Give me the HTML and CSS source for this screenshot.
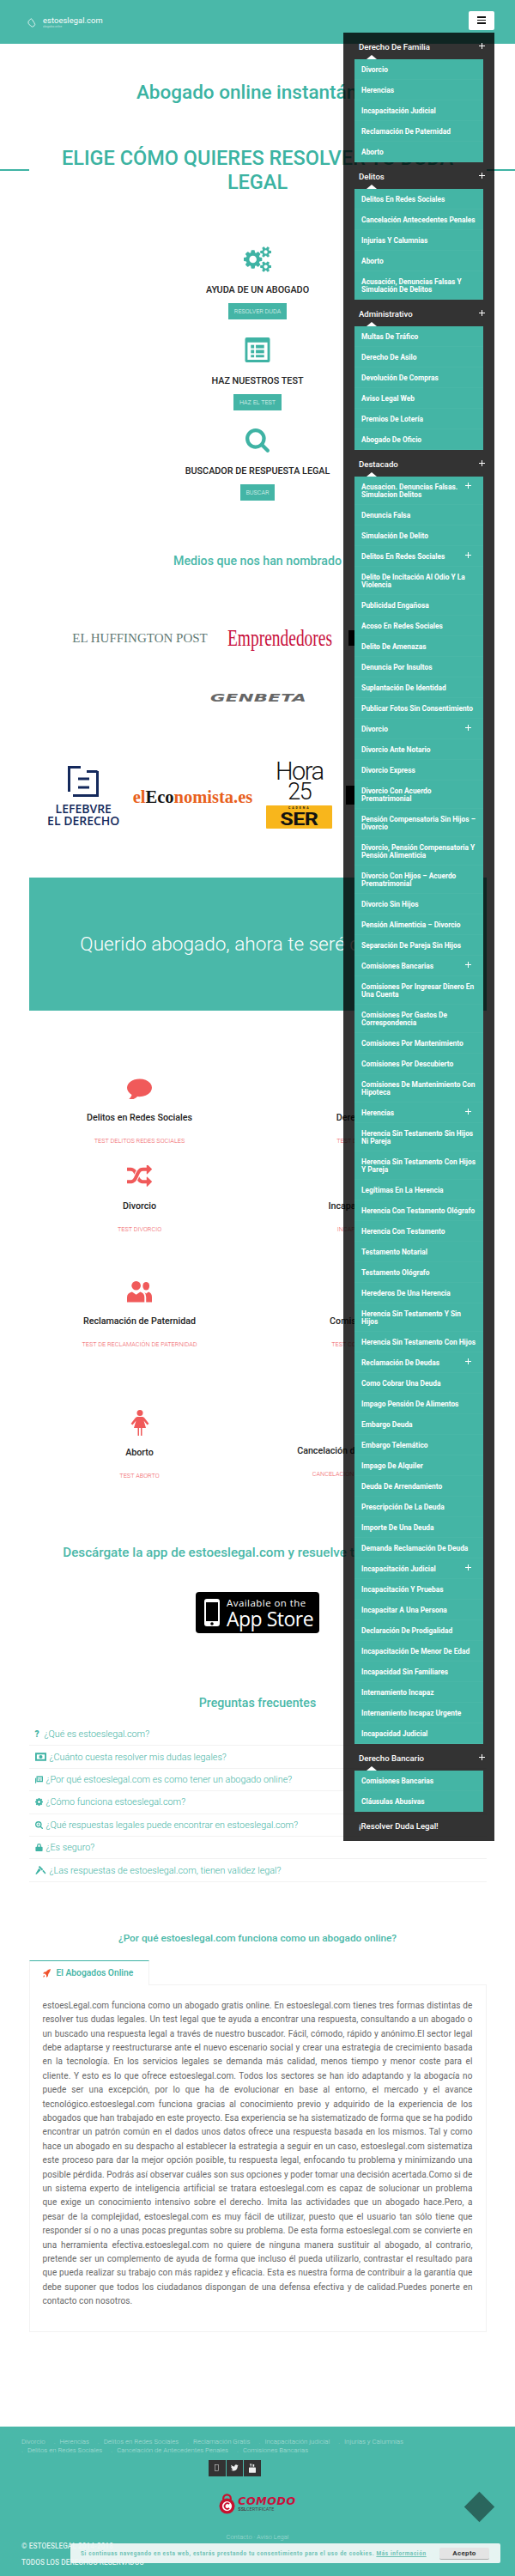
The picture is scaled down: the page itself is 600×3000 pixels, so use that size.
FILE: index.html
```html
<!DOCTYPE html>
<html lang="es">
<head>
<meta charset="utf-8">
<title>estoeslegal.com</title>
<link rel="stylesheet" href="styles.css">
</head>
<body>
<header class="topbar">
  <a class="brand">
    <svg class="brand-icon" viewBox="0 0 14 14"><path d="M3 4.500 L5.500 1.800 A1.600 1.600 0 0 1 8 2 L11.300 7 A3.300 3.300 0 0 1 6 11.600 L3 8.500 Q1.800 6 3 4.500" fill="none" stroke="#fff" stroke-width="1"/></svg>
    <span class="brand-text"><span class="brand-name">estoeslegal.com</span><span class="brand-sub">abogados online</span></span>
  </a>
  <button class="burger"><span></span><span></span><span></span></button>
</header>

<main>
  <h1 class="lead">Abogado online instantáneo</h1>
  <div class="title-row">
    <span class="title-line"></span>
    <h2 class="title">ELIGE CÓMO QUIERES RESOLVER TU DUDA LEGAL</h2>
    <span class="title-line"></span>
  </div>

  <section class="features">
    <div class="feature">
      <div class="feature-icon"><svg class="ico-gears" viewBox="0 0 1920 1792"><path d="M896 896q0-106-75-181t-181-75-181 75-75 181 75 181 181 75 181-75 75-181zm768 512q0-52-38-90t-90-38-90 38-38 90q0 53 37.500 90.500t90.500 37.500 90.500-37.500 37.500-90.500zm0-1024q0-52-38-90t-90-38-90 38-38 90q0 53 37.500 90.500t90.500 37.500 90.500-37.500 37.500-90.500zm-384 421v185q0 10-7 19.500t-16 10.500l-155 24q-11 35-32 76 34 48 90 115 7 11 7 20 0 12-7 19-23 30-82.500 89.500t-78.500 59.500q-11 0-21-7l-115-90q-37 19-77 31-11 108-23 155-7 24-30 24h-186q-11 0-20-7.500t-10-17.500l-23-153q-34-10-75-31l-118 89q-7 7-20 7-11 0-21-8-144-133-144-160 0-9 7-19 10-14 41-53t47-61q-23-44-35-82l-152-24q-10-1-17-9.500t-7-19.500v-185q0-10 7-19.500t16-10.500l155-24q11-35 32-76-34-48-90-115-7-11-7-20 0-12 7-20 22-30 82-89t79-59q11 0 21 7l115 90q34-18 77-32 11-108 23-154 7-24 30-24h186q11 0 20 7.500t10 17.500l23 153q34 10 75 31l118-89q8-7 20-7 11 0 21 8 144 133 144 160 0 8-7 19-12 16-42 54t-45 60q23 48 34 82l152 23q10 2 17 10.500t7 19.500zm640 533v140q0 16-149 31-12 27-30 52 51 113 51 138 0 4-4 7-122 71-124 71-8 0-46-47t-52-68q-20 2-30 2t-30-2q-14 21-52 68t-46 47q-2 0-124-71-4-3-4-7 0-25 51-138-18-25-30-52-149-15-149-31v-140q0-16 149-31 13-29 30-52-51-113-51-138 0-4 4-7 4-2 35-20t59-34 30-16q8 0 46 46.500t52 67.500q20-2 30-2t30 2q51-71 92-112l6-2q4 0 124 70 4 3 4 7 0 25-51 138 17 23 30 52 149 15 149 31zm0-1024v140q0 16-149 31-12 27-30 52 51 113 51 138 0 4-4 7-122 71-124 71-8 0-46-47t-52-68q-20 2-30 2t-30-2q-14 21-52 68t-46 47q-2 0-124-71-4-3-4-7 0-25 51-138-18-25-30-52-149-15-149-31v-140q0-16 149-31 13-29 30-52-51-113-51-138 0-4 4-7 4-2 35-20t59-34 30-16q8 0 46 46.500t52 67.500q20-2 30-2t30 2q51-71 92-112l6-2q4 0 124 70 4 3 4 7 0 25-51 138 17 23 30 52 149 15 149 31z"/></svg></div>
      <h3 class="feature-title">AYUDA DE UN ABOGADO</h3>
      <a class="btn">RESOLVER DUDA</a>
    </div>
    <div class="feature">
      <div class="feature-icon"><svg class="ico-list" viewBox="0 0 30 30"><path fill-rule="evenodd" d="M2 0h26a2 2 0 0 1 2 2v26a2 2 0 0 1-2 2H2a2 2 0 0 1-2-2V2a2 2 0 0 1 2-2zM3 6v21h24V6z"/><rect x="7" y="9" width="4" height="4"/><rect x="13" y="9" width="10" height="4"/><rect x="7" y="15" width="4" height="4"/><rect x="13" y="15" width="10" height="4"/><rect x="7" y="21" width="4" height="3"/><rect x="13" y="21" width="10" height="3"/></svg></div>
      <h3 class="feature-title">HAZ NUESTROS TEST</h3>
      <a class="btn">HAZ EL TEST</a>
    </div>
    <div class="feature">
      <div class="feature-icon"><svg class="ico-search" viewBox="64 128 1664 1664"><path d="M1216 832q0-185-131.500-316.500t-316.500-131.500-316.500 131.500-131.500 316.500 131.500 316.500 316.500 131.500 316.500-131.500 131.500-316.500zm512 832q0 52-38 90t-90 38q-54 0-90-38l-343-342q-179 124-399 124-143 0-273.500-55.500t-225-150-150-225-55.500-273.500 55.500-273.500 150-225 225-150 273.500-55.500 273.500 55.500 225 150 150 225 55.500 273.500q0 220-124 399l343 343q37 37 37 90z"/></svg></div>
      <h3 class="feature-title">BUSCADOR DE RESPUESTA LEGAL</h3>
      <a class="btn">BUSCAR</a>
    </div>
  </section>

  <h2 class="subhead">Medios que nos han nombrado</h2>

  <div class="logos logos-one">
    <span class="logo-huff">EL HUFFINGTON POST</span>
    <span class="logo-empr"><span>Emprendedores</span></span>
    <span class="logo-hidden"></span>
  </div>
  <div class="logos logos-two">
    <span class="logo-genbeta"><span>GENBETA</span></span>
  </div>
  <div class="logos logos-three">
    <span class="logo-lefebvre">
      <svg class="lefebvre-mark" viewBox="0 0 36 36"><path d="M15 1.500H1.500V30 M34.500 6V34.500H6 M12 15H25 M12 25H25 M22 6.500H34.500" fill="none" stroke="#14295c" stroke-width="3"/></svg>
      <span>LEFEBVRE</span><span>EL DERECHO</span>
    </span>
    <span class="logo-eco">el<b>Eco</b>nomista.es</span>
    <span class="logo-ser">
      <span class="ser-hora">Hora</span>
      <span class="ser-num">25</span>
      <span class="ser-box"><small>CADENA</small><strong>SER</strong></span>
    </span>
    <span class="logo-hidden logo-hidden-two"></span>
  </div>

  <section class="banner"><p>Querido abogado, ahora te seré cliente fiel</p></section>

  <section class="tests">
    <article class="test">
      <div class="test-icon"><svg viewBox="0 128 1792 1560"><path d="M1792 896q0 174-120 321.500t-326 233-450 85.500q-70 0-145-8-198 175-460 242-49 14-114 22-17 2-30.500-9t-17.500-29v-1q-3-4-.5-12t2-10 4.500-9.500l6-9 7-8.500 8-9q7-8 31-34.500t34.500-38 31-39.500 32.500-51 27-59 26-76q-157-89-247.500-220t-90.500-281q0-130 71-248.500t191-204.500 286-136.500 348-50.500q244 0 450 85.500t326 233 120 321.500z"/></svg></div>
      <h3>Delitos en Redes Sociales</h3><a>TEST DELITOS REDES SOCIALES</a>
    </article>
    <article class="test">
      <div class="test-icon"></div>
      <h3>Derecho de Familia</h3><a>TEST DERECHO DE FAMILIA</a>
    </article>
    <article class="test">
      <div class="test-icon"><svg viewBox="0 160 1792 1472"><path d="M666 481q-60 92-137 273-22-45-37-72.500t-40.500-63.500-51-56.500-63-35-81.500-14.500h-224q-14 0-23-9t-9-23v-192q0-14 9-23t23-9h224q250 0 410 225zm1126 799q0 14-9 23l-320 320q-9 9-23 9-13 0-22.500-9.500t-9.500-22.500v-192q-32 0-85 .5t-81 1-73-1-71-5-64-10.500-63-18.500-58-28.500-59-40-55-53.500-56-69.500q59-93 136-273 22 45 37 72.500t40.500 63.500 51 56.500 63 35 81.500 14.500h256v-192q0-14 9-23t23-9q12 0 24 10l319 319q9 9 9 23zm0-896q0 14-9 23l-320 320q-9 9-23 9-13 0-22.500-9.500t-9.500-22.500v-192h-256q-48 0-87 15t-69 45-51 61.500-45 77.500q-32 62-78 171-29 66-49.500 111t-54 105-64 100-74 83-90 68.500-106.500 42-128 16.500h-224q-14 0-23-9t-9-23v-192q0-14 9-23t23-9h224q48 0 87-15t69-45 51-61.500 45-77.500q32-62 78-171 29-66 49.500-111t54-105 64-100 74-83 90-68.500 106.500-42 128-16.500h256v-192q0-14 9-23t23-9q12 0 24 10l319 319q9 9 9 23z"/></svg></div>
      <h3>Divorcio</h3><a>TEST DIVORCIO</a>
    </article>
    <article class="test">
      <div class="test-icon"></div>
      <h3>Incapacitación Judicial</h3><a>INCAPACITACIÓN JUDICIAL</a>
    </article>
    <article class="test">
      <div class="test-icon"><svg viewBox="0 0 30 26"><circle cx="11" cy="6" r="5.500"/><path d="M0 26V20Q0 15 6 13.500L11 17L16 13.500Q21 15 21 20V26Z"/><ellipse cx="23" cy="6.500" rx="4" ry="5"/><path d="M21 14L23 15.500L26 13.500Q30 15 30 20V26H23V20Q23 16 21 14Z"/></svg></div>
      <h3>Reclamación de Paternidad</h3><a>TEST DE RECLAMACIÓN DE PATERNIDAD</a>
    </article>
    <article class="test">
      <div class="test-icon"></div>
      <h3>Comisiones Bancarias</h3><a>TEST COMISIONES BANCARIAS</a>
    </article>
    <article class="test">
      <div class="test-icon"><svg viewBox="0 0 22 30"><circle cx="11" cy="3.500" r="3.500"/><path d="M8 8H14Q15.500 8 16.500 9.500L21.500 16L19.500 17.500L15.500 12.500L18 21H13.500V30H12V21H10V30H8.500V21H4L6.500 12.500L2.500 17.500L.5 16L5.500 9.500Q6.500 8 8 8Z"/></svg></div>
      <h3>Aborto</h3><a>TEST ABORTO</a>
    </article>
    <article class="test">
      <div class="test-icon"></div>
      <h3>Cancelación de Antecedentes Penales</h3><a>CANCELACIÓN DE ANTECEDENTES PENALES</a>
    </article>
  </section>

  <h2 class="subhead subhead-app">Descárgate la app de estoeslegal.com y resuelve tus dudas legales</h2>
  <div class="store-wrap">
    <a class="store">
      <svg class="store-phone" viewBox="0 0 18 32"><rect width="18" height="32" rx="3" fill="#fff"/><rect x="2" y="4" width="14" height="22" fill="#000"/><circle cx="9" cy="29" r="1.800" fill="#000"/></svg>
      <span class="store-text"><span class="store-top">Available on the</span><span class="store-main">App Store</span></span>
    </a>
  </div>

  <h2 class="subhead subhead-faq">Preguntas frecuentes</h2>
  <ul class="faq">
    <li><span class="faq-q">?</span>¿Qué es estoeslegal.com?</li>
    <li><svg class="faq-ico faq-ico-wide" viewBox="0 0 14 10"><path fill-rule="evenodd" d="M0 0h14v10H0zM2 2v6h10V2z"/><circle cx="7" cy="5" r="2.200"/></svg>¿Cuánto cuesta resolver mis dudas legales?</li>
    <li><svg class="faq-ico" viewBox="0 0 12 11"><path d="M2 0h10v9H2zM0 3h1.500v8H0z"/><path d="M3.500 2h7v2h-7zM3.500 5h3v2h-3zM7.500 5h3v2h-3z" fill="#fff"/></svg>¿Por qué estoeslegal.com es como tener un abogado online?</li>
    <li><svg class="faq-ico" viewBox="128 128 1536 1536"><path d="M1152 896q0-106-75-181t-181-75-181 75-75 181 75 181 181 75 181-75 75-181zm512-109v222q0 12-8 23t-20 13l-185 28q-19 54-39 91 35 50 107 138 10 12 10 25t-9 23q-27 37-99 108t-94 71q-12 0-26-9l-138-108q-44 23-91 38-16 136-29 186-7 28-36 28h-222q-14 0-24.500-8.500t-11.500-21.500l-28-184q-49-16-90-37l-141 107q-10 9-25 9-14 0-25-11-126-114-165-168-7-10-7-23 0-12 8-23 15-21 51-66.500t54-70.500q-27-50-41-99l-183-27q-13-2-21-12.500t-8-23.500v-222q0-12 8-23t19-13l186-28q14-46 39-92-40-57-107-138-10-12-10-24 0-10 9-23 26-36 98.500-107.500t94.500-71.500q13 0 26 10l138 107q44-23 91-38 16-136 29-186 7-28 36-28h222q14 0 24.500 8.500t11.500 21.500l28 184q49 16 90 37l142-107q9-9 24-9 13 0 25 10 129 119 165 170 7 8 7 22 0 12-8 23-15 21-51 66.500t-54 70.500q26 50 41 98l183 28q13 2 21 12.500t8 23.500z"/></svg>¿Cómo funciona estoeslegal.com?</li>
    <li><svg class="faq-ico" viewBox="64 128 1664 1664"><path d="M1216 832q0-185-131.500-316.500t-316.500-131.500-316.500 131.500-131.500 316.500 131.500 316.500 316.500 131.500 316.500-131.500 131.500-316.500zm512 832q0 52-38 90t-90 38q-54 0-90-38l-343-342q-179 124-399 124-143 0-273.500-55.500t-225-150-150-225-55.500-273.500 55.500-273.500 150-225 225-150 273.500-55.500 273.500 55.500 225 150 150 225 55.500 273.500q0 220-124 399l343 343q37 37 37 90z"/><path d="M700 560h136v204h204v136H836v204H700V900H496V764h204z"/></svg>¿Qué respuestas legales puede encontrar en estoeslegal.com?</li>
    <li><svg class="faq-ico" viewBox="0 0 10 11"><path fill-rule="evenodd" d="M1 4.500H2V3a3 3 0 0 1 6 0v1.500H9q1 0 1 1V10q0 1-1 1H1q-1 0-1-1V5.500q0-1 1-1zM3.500 4.500h3V3a1.500 1.500 0 0 0-3 0z"/></svg>¿Es seguro?</li>
    <li><svg class="faq-ico faq-ico-wide" viewBox="0 0 13 11"><path d="M5 0L9.500 4.500L8 6L3.500 1.500zM4 3L6.500 5.500L1.500 10.500Q.5 11 0 10.500T.5 9zM9.800 5.200L13 9L12 10.500L8.500 6.500z"/></svg>¿Las respuestas de estoeslegal.com, tienen validez legal?</li>
  </ul>

  <h2 class="subhead subhead-why">¿Por qué estoeslegal.com funciona como un abogado online?</h2>
  <div class="tabs">
    <div class="tab">
      <svg class="rocket" viewBox="0 0 10 11"><path d="M10 0Q9.500 4 7 6.500L6.500 9.500L4.500 11L4.500 8L2.500 6L0 6L1.500 4L4 3.500Q6.500 .5 10 0zM1.500 8L2.500 9Q2 10.500 .3 10.700Q.5 9 1.500 8z"/></svg>
      <span>El Abogados Online</span>
    </div>
  </div>
  <div class="tab-body">
    <p>estoesLegal.com funciona como un abogado gratis online. En estoeslegal.com tienes tres formas distintas de resolver tus dudas legales. Un test legal que te ayuda a encontrar una respuesta, consultando a un abogado o un buscado una respuesta legal a través de nuestro buscador. Fácil, cómodo, rápido y anónimo.El sector legal debe adaptarse y reestructurarse ante el nuevo escenario social y crear una estrategia de crecimiento basada en la tecnología. En los servicios legales se demanda más calidad, menos tiempo y menor coste para el cliente. Y esto es lo que ofrece estoeslegal.com. Todos los sectores se han ido adaptando y la abogacía no puede ser una excepción, por lo que ha de evolucionar en base al entorno, el mercado y el avance tecnológico.estoeslegal.com funciona gracias al conocimiento previo y adquirido de la experiencia de los abogados que han trabajado en este proyecto. Esa experiencia se ha sistematizado de forma que se ha podido encontrar un patrón común en el dados unos datos ofrece una respuesta basada en los mismos. Tal y como hace un abogado en su despacho al establecer la estrategia a seguir en un caso, estoeslegal.com sistematiza este proceso para dar la mejor opción posible, tu respuesta legal, enfocando tu problema y minimizando una posible pérdida. Podrás así observar cuáles son sus opciones y poder tomar una decisión acertada.Como si de un sistema experto de inteligencia artificial se tratara estoeslegal.com es capaz de solucionar un problema que exige un conocimiento intensivo sobre el derecho. Imita las actividades que un abogado hace.Pero, a pesar de la complejidad, estoeslegal.com es muy fácil de utilizar, puesto que el usuario tan sólo tiene que responder sí o no a unas pocas preguntas sobre su problema. De esta forma estoeslegal.com se convierte en una herramienta efectiva.estoeslegal.com no quiere de ninguna manera sustituir al abogado, al contrario, pretende ser un complemento de ayuda de forma que incluso él pueda utilizarlo, contrastar el resultado para que pueda realizar su trabajo con más rapidez y eficacia. Esta es nuestra forma de contribuir a la garantía que debe suponer que todos los ciudadanos dispongan de una defensa efectiva y de calidad.Puedes ponerte en contacto con nosotros.</p>
  </div>
</main>

<footer class="footer">
  <ul class="foot-links">
    <li>Divorcio</li><li>Herencias</li><li>Delitos en Redes Sociales</li><li>Reclamación Gratis</li><li>Incapacitación judicial</li><li>Injurias y Calumnias</li><li>Delitos en Redes Sociales</li><li>Cancelación de Antecedentes Penales</li><li>Comisiones Bancarias</li>
  </ul>
  <div class="social">
    <a><svg viewBox="0 0 6 10"><rect x=".5" y=".5" width="5" height="9" fill="none" stroke="#ddd" stroke-width=".7"/></svg></a>
    <a><svg class="social-tw" viewBox="128 256 1600 1300"><path d="M1684 408q-67 98-162 167 1 14 1 42 0 130-38 259.500t-115.500 248.500-184.500 210.500-258 146-323 54.500q-271 0-496-145 35 4 78 4 225 0 401-138-105-2-188-64.500t-114-159.500q33 5 61 5 43 0 85-11-112-23-185.500-111.500t-73.500-205.500v-4q68 38 146 41-66-44-105-115t-39-154q0-88 44-163 121 149 294.500 238.500t371.500 99.500q-8-38-8-74 0-134 94.500-228.500t228.500-94.500q140 0 236 102 109-21 205-78-37 115-142 178 84-9 168-45z" fill="#eee"/></svg></a>
    <a><svg class="social-yt" viewBox="0 0 9 12"><path d="M1 0h1l.6 1.500L3.200 0h1L3 2.500V4H2V2.500zM5 1h2v3H5zM.8 5h7.400Q9 5 9 6v5q0 1-.8 1H.8Q0 12 0 11V6q0-1 .8-1z" fill="#eee"/></svg></a>
  </div>
  <div class="comodo">
    <svg class="comodo-lock" viewBox="0 0 22 28"><path d="M6 9V6.500a5 5 0 0 1 10 0V9" fill="none" stroke="#c8102e" stroke-width="2.600"/><circle cx="11" cy="17" r="10.500" fill="#c8102e"/><circle cx="11" cy="17" r="6.500" fill="#fff"/><path d="M14 14.200a3.800 3.800 0 1 0 0 5.600" fill="none" stroke="#c8102e" stroke-width="2"/></svg>
    <span class="comodo-text"><strong>COMODO</strong><small><b>SSL</b>CERTIFICATE</small></span>
  </div>
  <p class="foot-legal">Contacto · Aviso Legal</p>
  <p class="foot-copy">© ESTOESLEGAL 2014-2018</p>
  <p class="foot-copy foot-rights">TODOS LOS DERECHOS RESERVADOS</p>
</footer>

<nav class="side-menu">
  <div class="menu-head">Derecho De Familia<i class="plus"></i></div>
  <ul class="menu-panel">
    <li>Divorcio</li><li>Herencias</li><li>Incapacitación Judicial</li><li>Reclamación De Paternidad</li><li>Aborto</li>
  </ul>
  <div class="menu-head">Delitos<i class="plus"></i></div>
  <ul class="menu-panel">
    <li>Delitos En Redes Sociales</li><li>Cancelación Antecedentes Penales</li><li>Injurias Y Calumnias</li><li>Aborto</li><li>Acusación, Denuncias Falsas Y Simulación De Delitos</li>
  </ul>
  <div class="menu-head">Administrativo<i class="plus"></i></div>
  <ul class="menu-panel">
    <li>Multas De Tráfico</li><li>Derecho De Asilo</li><li>Devolución De Compras</li><li>Aviso Legal Web</li><li>Premios De Lotería</li><li>Abogado De Oficio</li>
  </ul>
  <div class="menu-head">Destacado<i class="plus"></i></div>
  <ul class="menu-panel">
    <li class="has-sub">Acusacion. Denuncias Falsas. Simulacion Delitos<i class="plus"></i></li>
    <li>Denuncia Falsa</li><li>Simulación De Delito</li>
    <li class="has-sub">Delitos En Redes Sociales<i class="plus"></i></li>
    <li>Delito De Incitación Al Odio Y La Violencia</li><li>Publicidad Engañosa</li><li>Acoso En Redes Sociales</li><li>Delito De Amenazas</li><li>Denuncia Por Insultos</li><li>Suplantación De Identidad</li><li>Publicar Fotos Sin Consentimiento</li>
    <li class="has-sub">Divorcio<i class="plus"></i></li>
    <li>Divorcio Ante Notario</li><li>Divorcio Express</li><li>Divorcio Con Acuerdo Prematrimonial</li><li>Pensión Compensatoria Sin Hijos – Divorcio</li><li>Divorcio, Pensión Compensatoria Y Pensión Alimenticia</li><li>Divorcio Con Hijos – Acuerdo Prematrimonial</li><li>Divorcio Sin Hijos</li><li>Pensión Alimenticia – Divorcio</li><li>Separación De Pareja Sin Hijos</li>
    <li class="has-sub">Comisiones Bancarias<i class="plus"></i></li>
    <li>Comisiones Por Ingresar Dinero En Una Cuenta</li><li>Comisiones Por Gastos De Correspondencia</li><li>Comisiones Por Mantenimiento</li><li>Comisiones Por Descubierto</li><li>Comisiones De Mantenimiento Con Hipoteca</li>
    <li class="has-sub">Herencias<i class="plus"></i></li>
    <li>Herencia Sin Testamento Sin Hijos Ni Pareja</li><li>Herencia Sin Testamento Con Hijos Y Pareja</li><li>Legítimas En La Herencia</li><li>Herencia Con Testamento Ológrafo</li><li>Herencia Con Testamento</li><li>Testamento Notarial</li><li>Testamento Ológrafo</li><li>Herederos De Una Herencia</li><li>Herencia Sin Testamento Y Sin Hijos</li><li>Herencia Sin Testamento Con Hijos</li>
    <li class="has-sub">Reclamación De Deudas<i class="plus"></i></li>
    <li>Como Cobrar Una Deuda</li><li>Impago Pensión De Alimentos</li><li>Embargo Deuda</li><li>Embargo Telemático</li><li>Impago De Alquiler</li><li>Deuda De Arrendamiento</li><li>Prescripción De La Deuda</li><li>Importe De Una Deuda</li><li>Demanda Reclamación De Deuda</li>
    <li class="has-sub">Incapacitación Judicial<i class="plus"></i></li>
    <li>Incapacitación Y Pruebas</li><li>Incapacitar A Una Persona</li><li>Declaración De Prodigalidad</li><li>Incapacitación De Menor De Edad</li><li>Incapacidad Sin Familiares</li><li>Internamiento Incapaz</li><li>Internamiento Incapaz Urgente</li><li>Incapacidad Judicial</li>
  </ul>
  <div class="menu-head">Derecho Bancario<i class="plus"></i></div>
  <ul class="menu-panel">
    <li>Comisiones Bancarias</li><li>Cláusulas Abusivas</li>
  </ul>
  <div class="menu-head menu-head-last">¡Resolver Duda Legal!</div>
</nav>

<a class="to-top"><i></i></a>

<aside class="cookie">
  <p>Si continuas navegando en esta web, estarás prestando tu consentimiento para el uso de cookies. <u>Más información</u></p>
  <button>Acepto</button>
</aside>
</body>
</html>
```
FILE: styles.css
```css
* { box-sizing: border-box; }
html, body { margin: 0; padding: 0; }
body {
  position: relative;
  height: 3000px;
  overflow: hidden;
  background: #fff;
  font-family: Roboto, "Liberation Sans", sans-serif;
  color: #222;
}
h1, h2, h3, p, ul { margin: 0; padding: 0; }
ul { list-style: none; }
svg { display: block; }

/* top bar */
.topbar {
  height: 51px;
  background: #4ab8a9;
  display: flex;
  justify-content: space-between;
  align-items: flex-start;
  padding: 13px 24.500px 0 31px;
}
.brand { display: flex; align-items: center; gap: 8px; color: #fff; margin-top: 5px; }
.brand-icon { width: 11px; height: 11px; margin-top: 2px; }
.brand-text { display: flex; flex-direction: column; }
.brand-name { font-size: 9.300px; font-weight: 400; line-height: 11px; letter-spacing: .1px; }
.brand-sub { font-size: 3px; line-height: 4px; opacity: .6; }
.burger {
  width: 30px; height: 22px;
  background: #fff; border: 0; border-radius: 2px;
  padding: 6px 10px 0;
  display: flex; flex-direction: column; gap: 2px;
}
.burger span { display: block; width: 10px; height: 1.500px; background: #111; }

/* headings */
.lead {
  margin-top: 42px;
  text-align: center;
  font-size: 22.500px;
  line-height: 28px;
  font-weight: 500;
  color: #3bb3a2;
}
.title-row { display: flex; align-items: center; margin-top: 49px; }
.title-line { flex: 0 0 33.500px; height: 2.500px; background: #3fb3a4; }
.title {
  flex: 1;
  text-align: center;
  font-size: 23.500px;
  line-height: 28px;
  font-weight: 500;
  color: #3bb3a2;
  padding: 0 30px;
}

/* features */
.features { padding-top: 61px; }
.feature { height: 105.500px; display: flex; flex-direction: column; align-items: center; }
.feature-icon { height: 30px; display: flex; align-items: center; justify-content: center; fill: #3fb3a4; }
.ico-gears { width: 32px; height: 30px; }
.ico-list { width: 30px; height: 29px; }
.ico-search { width: 28px; height: 28px; }
.feature-title { margin-top: 14px; font-size: 10.800px; line-height: 14px; font-weight: 500; color: #222; }
.btn {
  margin-top: 8px;
  height: 19px;
  padding: 0 6.500px;
  background: #44b5a6;
  color: #e6f7f4;
  font-size: 7.200px;
  font-weight: 300;
  line-height: 19px;
}
.subhead { text-align: center; font-size: 14.200px; line-height: 20px; font-weight: 500; color: #4ab8a9; }
.features + .subhead { margin-top: 39.500px; }

/* press logos */
.logos { display: flex; justify-content: center; }
.logos-one { margin-top: 65px; height: 30px; gap: 23px; align-items: center; }
.logos-two { margin-top: 45px; height: 20px; align-items: center; }
.logos-three { margin-top: 63px; height: 79px; gap: 16px; align-items: flex-start; }
.logo-huff { font-family: "Liberation Serif", serif; font-size: 15px; color: #5f7a74; white-space: nowrap; }
.logo-empr { width: 118px; height: 30px; display: block; }
.logo-empr span {
  display: block;
  font-family: "Liberation Serif", serif;
  font-size: 27px;
  line-height: 30px;
  color: #c8103c;
  white-space: nowrap;
  transform: scaleX(.72);
  transform-origin: left center;
}
.logo-hidden { width: 110px; height: 18px; background: #000; }
.logo-hidden-two { width: 141px; height: 22px; margin-top: 29px; }
.logo-genbeta { display: block; width: 111px; }
.logo-genbeta span {
  display: block;
  font-family: "DejaVu Sans", sans-serif;
  font-weight: 700;
  font-style: italic;
  font-size: 12.500px;
  line-height: 20px;
  color: #666;
  letter-spacing: .2px;
  transform: scaleX(1.700);
  transform-origin: left center;
}
.logo-lefebvre {
  display: flex; flex-direction: column; align-items: center;
  font-family: "Open Sans", sans-serif;
  color: #14295c;
  font-size: 14px;
  line-height: 14px;
  font-weight: 600;
  width: 83px;
  white-space: nowrap;
  margin-top: 6px;
}
.lefebvre-mark { width: 36px; height: 36px; margin-bottom: 7px; }
.logo-eco {
  font-family: "Liberation Serif", serif;
  font-weight: 700;
  font-size: 20.500px;
  line-height: 28px;
  color: #e8601c;
  white-space: nowrap;
  margin-top: 28px;
}
.logo-eco b { color: #111; }
.logo-ser { display: flex; flex-direction: column; align-items: center; width: 77px; }
.ser-hora { font-size: 29px; line-height: 24px; font-weight: 300; letter-spacing: -1.500px; color: #111; }
.ser-num { font-size: 27px; line-height: 24px; font-weight: 300; letter-spacing: -1.500px; color: #111; }
.ser-box {
  margin-top: 4px;
  width: 77px; height: 27px;
  background: #f8b61c;
  border-radius: 1px;
  display: flex; flex-direction: column; align-items: center;
  color: #111;
}
.ser-box small { font-size: 3.500px; line-height: 7px; letter-spacing: 2px; font-weight: 700; }
.ser-box strong { font-size: 21px; line-height: 18px; font-weight: 700; letter-spacing: -.5px; transform: scaleX(1.200); }

/* banner */
.banner {
  margin: 57px 33.500px 0 33.500px;
  height: 155px;
  background: #4ab8a9;
  display: flex;
  align-items: center;
  justify-content: center;
  color: #fff;
  padding-bottom: 1px;
}
.banner p { font-size: 22.600px; font-weight: 300; white-space: nowrap; }

/* tests */
.tests {
  margin: 75px 0 0 25px;
  width: 550px;
  display: grid;
  grid-template-columns: 275px 275px;
  grid-template-rows: 103px 134px 153px 80px;
}
.test { display: flex; flex-direction: column; align-items: center; text-align: center; }
.test-icon { height: 30px; display: flex; align-items: center; justify-content: center; fill: #f05a5a; }
.test-icon svg { width: 29px; height: 26px; }
.test:nth-child(7) .test-icon svg { width: 22px; height: 30px; }
.test h3 { margin-top: 13px; font-size: 10.700px; line-height: 14px; font-weight: 500; color: #222; white-space: nowrap; }
.test a { margin-top: 15px; font-size: 7.300px; line-height: 10px; font-weight: 300; color: #ef5a62; white-space: nowrap; }

.subhead-app { margin-top: 76px; font-size: 15.200px; }
.store-wrap { display: flex; justify-content: center; margin-top: 36px; }
.store {
  width: 144px; height: 48px;
  background: #000;
  border-radius: 4px;
  display: flex; align-items: center;
  padding-left: 10px;
  gap: 8px;
  color: #fff;
}
.store-phone { width: 18px; height: 32px; }
.store-text { display: flex; flex-direction: column; font-family: "Open Sans", sans-serif; }
.store-top { font-size: 11.500px; line-height: 13px; letter-spacing: .45px; white-space: nowrap; }
.store-main { font-size: 23px; line-height: 24px; letter-spacing: -.5px; white-space: nowrap; }

.subhead-faq { margin-top: 71px; font-size: 14.200px; }
.faq { margin: 14px 33.500px 0; }
.faq li {
  height: 26.400px;
  border-bottom: 1px solid #f2f2f2;
  display: flex;
  align-items: center;
  padding-left: 7px;
  gap: 4px;
  font-size: 10.800px;
  font-weight: 300;
  color: #3fb3a4;
  white-space: nowrap;
}
.faq-ico { width: 9px; height: 9px; fill: #3fb3a4; flex: none; }
.faq-ico-wide { width: 13px; height: 10px; }
.faq-q { width: 7px; font-weight: 900; font-size: 10px; }

.subhead-why { margin-top: 57px; font-size: 11.800px; line-height: 16px; }
.tabs { margin: 18px 33.500px 0; display: flex; }
.tab {
  width: 140px; height: 29px;
  border-top: 1px solid #3fb3a4;
  border-left: 1px solid #f2f2f2;
  border-right: 1px solid #f2f2f2;
  display: flex; align-items: center;
  padding-left: 15px;
  gap: 7px;
  font-size: 10.300px;
  font-weight: 500;
  color: #3fb3a4;
  background: #fff;
  margin-bottom: -1px;
  position: relative;
}
.rocket { width: 9px; height: 10px; fill: #f0532d; }
.tab-body { margin: 0 33.500px; border: 1px solid #f2f2f2; padding: 16px 15px 26px; }
.tab-body p { font-size: 10px; line-height: 16.400px; color: #666; text-align: justify; letter-spacing: .09px; }

/* footer */
.footer {
  margin-top: 110px;
  height: 177px;
  background: #4ab8a9;
  padding: 13px 25px 0;
  color: #fff;
}
.foot-links { display: flex; flex-wrap: wrap; font-size: 7.800px; line-height: 10px; font-weight: 300; color: rgba(255,255,255,.55); width: 470px; }
.foot-links li { margin-right: 10px; white-space: nowrap; }
.foot-links li + li::before { content: "."; margin-right: 5px; }
.social { display: flex; gap: 1px; margin: 6px 0 0 218px; }
.social a { width: 19.500px; height: 19px; background: #333; display: flex; align-items: center; justify-content: center; }
.social svg { width: 5px; height: 8px; }
.social .social-tw { width: 9px; height: 8px; }
.social .social-yt { width: 8px; height: 11px; }
.comodo { display: flex; align-items: center; justify-content: center; gap: 3px; margin: 20px 0 0 -25px; width: 600px; }
.comodo-lock { width: 19px; height: 24px; }
.comodo-text { display: flex; flex-direction: column; }
.comodo-text strong { font-size: 12.500px; line-height: 12px; font-style: italic; font-weight: 700; letter-spacing: .6px; color: #c8103c; font-family: "DejaVu Sans", sans-serif; }
.comodo-text small { font-size: 5.500px; line-height: 6px; color: #444; }
.foot-legal { margin-top: 22px; text-align: center; font-size: 7.500px; line-height: 9px; font-weight: 300; color: rgba(255,255,255,.5); }
.foot-copy { margin-top: 2px; font-size: 8.200px; line-height: 9px; font-weight: 500; letter-spacing: .1px; color: rgba(255,255,255,.85); }
.foot-rights { margin-top: 10px; }

/* side menu (dropdown open over the page) */
.side-menu {
  position: absolute;
  left: 400px; top: 38px;
  width: 175.500px;
  background: rgba(0,0,0,.8);
  padding: 0 13px;
}
.menu-head {
  position: relative;
  height: 31px;
  padding: 11px 0 0 5px;
  font-size: 9.600px;
  line-height: 12px;
  font-weight: 500;
  color: #fff;
}
.menu-head::after {
  content: "";
  position: absolute;
  left: 14px; bottom: 0;
  border-left: 6px solid transparent;
  border-right: 6px solid transparent;
  border-bottom: 5px solid #fff;
}
.menu-head-last { height: 34px; padding-top: 11px; }
.menu-head-last::after { display: none; }
.plus { position: absolute; width: 7px; height: 7px; right: -2px; top: 12px; }
.plus::before, .plus::after { content: ""; position: absolute; background: #fff; }
.plus::before { left: 0; right: 0; top: 3px; height: 1px; }
.plus::after { top: 0; bottom: 0; left: 3px; width: 1px; }
.menu-panel { background: #44b5a5; }
.menu-panel li {
  position: relative;
  padding: 7.500px 8px;
  font-size: 8.400px;
  line-height: 9px;
  font-weight: 700;
  color: #fff;
  box-shadow: inset 0 -1px 0 rgba(255,255,255,.03);
}
.has-sub { padding-right: 22px !important; }
.has-sub .plus { right: 14px; top: 7px; }

/* scroll to top diamond */
.to-top {
  position: absolute;
  left: 546px; top: 2907px;
  width: 25px; height: 25px;
  background: #2a665d;
  transform: rotate(45deg);
}

/* cookie bar */
.cookie {
  position: absolute;
  left: 82px; top: 2962px;
  width: 500.500px; height: 23px;
  background: rgba(239,247,246,.95);
  border-radius: 2px;
  display: flex;
  align-items: center;
  justify-content: space-between;
  padding: 0 12.500px 0 12px;
}
.cookie p { font-size: 6.400px; font-weight: 700; letter-spacing: .65px; color: #6cc1b4; white-space: nowrap; }
.cookie button {
  width: 58px; height: 14px;
  border: 0;
  border-bottom: 1px solid #aaa;
  border-radius: 2px;
  background: #e4e4e4;
  font-family: Roboto, sans-serif;
  font-size: 8px;
  font-weight: 700;
  letter-spacing: .3px;
  color: #333;
  padding: 0;
}
```
